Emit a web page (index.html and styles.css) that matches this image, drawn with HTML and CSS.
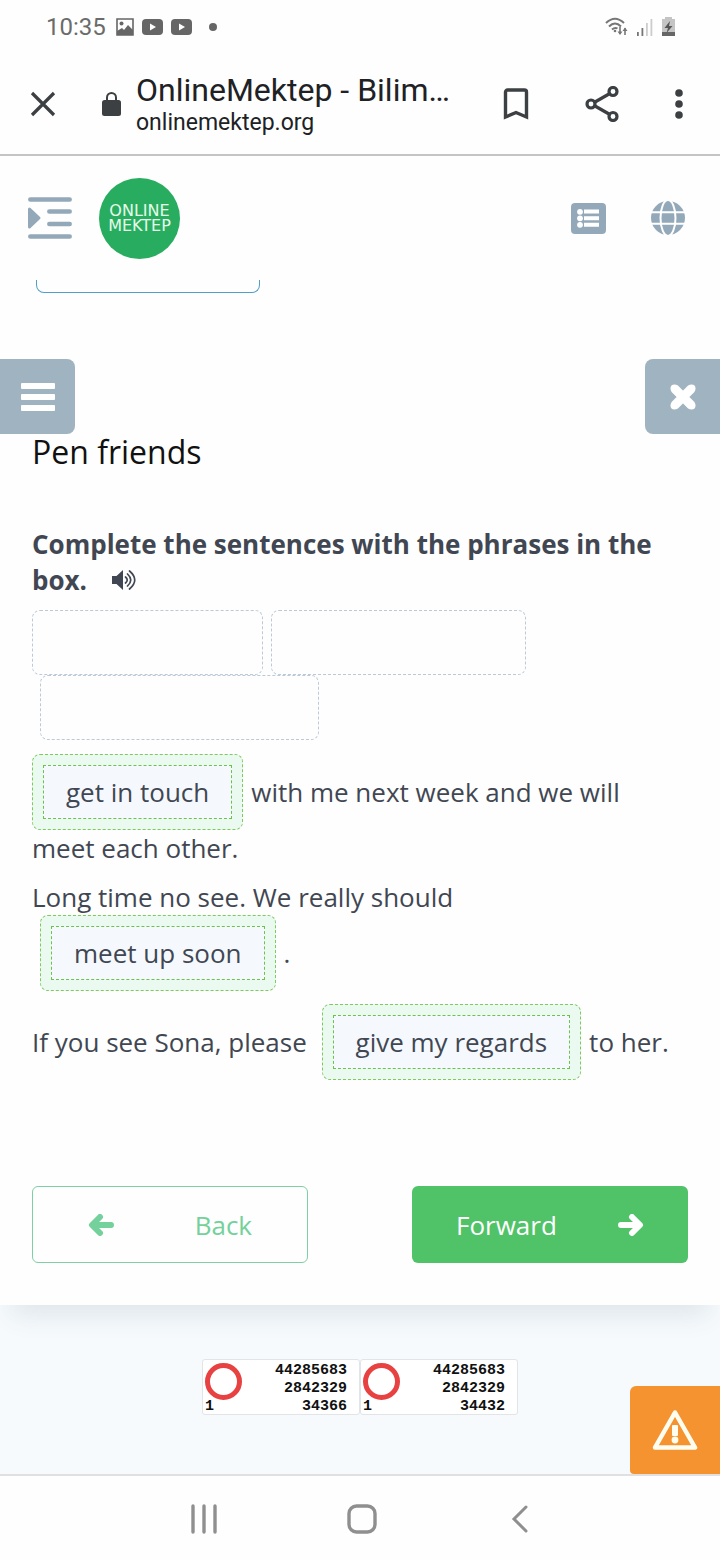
FILE: index.html
```
<!DOCTYPE html>
<html lang="en">
  <head>
    <meta charset="UTF-8" />
    <meta name="viewport" content="width=device-width, initial-scale=1.0" />
    <title>OnlineMektep - Bilim</title>
    <link rel="stylesheet" href="styles.css">
  </head>
  <body>
    <div class="status-bar">
      <span class="time">10:35</span>
      <svg width="18" height="18" viewBox="0 0 18 18"><path d="M1 1h16v16H1z" fill="none" stroke="#666" stroke-width="1.6"/><circle cx="5.5" cy="5.5" r="2" fill="#666"/><path d="M1 17v-4l5-3 2 2 4-5 5 5v5z" fill="#666"/></svg>
      <svg width="21" height="16" viewBox="0 0 21 16"><rect width="21" height="16" rx="4" fill="#666"/><path d="M8 4.500l6 3.500-6 3.500z" fill="#fff"/></svg>
      <svg width="21" height="16" viewBox="0 0 21 16"><rect width="21" height="16" rx="4" fill="#666"/><path d="M8 4.500l6 3.500-6 3.500z" fill="#fff"/></svg>
      <span class="dot"></span>
      <div class="signals">
        <svg width="23" height="20" viewBox="0 0 23 20" fill="none" stroke="#777" stroke-width="2"><path d="M1 6Q10-2.500 19 6M4 9.500Q10 3.500 16 9.500M7 12.500Q10 10 12.500 11.500"/><circle cx="10" cy="14" r="1.300" fill="#777" stroke="none"/><path d="M15 10v7M20 18v-7" stroke-width="1.600"/><path d="M12.500 14.500h5L15 18zM17.500 14h5L20 10.500z" fill="#777" stroke="none"/></svg>
        <svg width="16" height="18" viewBox="0 0 16 18"><path d="M0 14h1.800v4H0zM4.500 10h1.800v8H4.500z" fill="#777"/><path d="M9 5h1.800v13H9zM13.500 1h1.800v17h-1.800z" fill="#ccc"/></svg>
        <svg width="13" height="20" viewBox="0 0 13 20"><path d="M3 0h7v2h3v17H0V2h3z" fill="#c4c4c4"/><path d="M0 15h13v4H0z" fill="#666"/><path d="M8 4l-5.500 7H6l-1.500 5L10.500 9H7z" fill="#555"/></svg>
      </div>
    </div>

    <header class="browser-bar">
      <button type="button" aria-label="Close tab">
        <svg width="26" height="26" viewBox="0 0 26 26"><path d="M2 2l22 22M24 2L2 24" stroke="#3c4043" stroke-width="3.200"/></svg>
      </button>
      <svg class="lock" width="19" height="24" viewBox="0 0 19 24"><rect y="8" width="19" height="16" rx="2.500" fill="#3c4043"/><path d="M5 9V5.500a4.500 4.500 0 0 1 9 0V9" fill="none" stroke="#3c4043" stroke-width="2"/></svg>
      <div class="address">
        <span class="page-name">OnlineMektep - Bilim…</span>
        <span class="page-url">onlinemektep.org</span>
      </div>
      <div class="browser-actions">
        <button type="button" aria-label="Bookmark">
          <svg width="26" height="32" viewBox="0 0 26 32"><path d="M2.500 29V4a2 2 0 0 1 2-2h17a2 2 0 0 1 2 2v25L13 24.500z" fill="none" stroke="#3c4043" stroke-width="3.400"/></svg>
        </button>
        <button type="button" aria-label="Share">
          <svg width="34" height="36" viewBox="0 0 34 36" fill="none" stroke="#3c4043" stroke-width="3.200"><path d="M10 16l14-8M10 20l14 8"/><circle cx="6" cy="18" r="4"/><circle cx="28" cy="5.500" r="4"/><circle cx="28" cy="30.500" r="4"/></svg>
        </button>
        <button type="button" aria-label="More">
          <svg width="8" height="30" viewBox="0 0 8 30" fill="#3c4043"><circle cx="4" cy="4" r="3.800"/><circle cx="4" cy="15" r="3.800"/><circle cx="4" cy="26" r="3.800"/></svg>
        </button>
      </div>
    </header>

    <div class="site-header">
      <button type="button" aria-label="Open sidebar">
        <svg width="44" height="42" viewBox="0 0 44 42"><g stroke="#93a9b9" stroke-width="4.500" stroke-linecap="round"><path d="M2.300 2.500h39.400M21.300 14.500h20.400M21.300 27h20.400M2.300 39.500h39.400"/></g><path d="M1.500 12L11 21 1.500 30z" fill="#93a9b9" stroke="#93a9b9" stroke-width="3" stroke-linejoin="round"/></svg>
      </button>
      <a class="logo" href="#">ONLINE<br>MEKTEP</a>
      <div class="site-actions">
        <button type="button" aria-label="Tasks">
          <svg width="35" height="31" viewBox="0 0 35 31"><rect width="35" height="31" rx="4" fill="#93a9b9"/><g fill="#fff"><circle cx="9" cy="8.800" r="2.900"/><circle cx="9" cy="15.300" r="2.900"/><circle cx="9" cy="21.800" r="2.900"/><path d="M13 6.500h15v4H13zM13 13.200h15v4H13zM13 19.800h15v4H13z"/></g></svg>
        </button>
        <button type="button" aria-label="Language">
          <svg width="34" height="34" viewBox="0 0 34 34"><circle cx="17" cy="17" r="17" fill="#93a9b9"/><g fill="none" stroke="#fff" stroke-width="2"><ellipse cx="17" cy="17" rx="7.500" ry="18"/><path d="M0 11.300h34M0 22.700h34"/></g></svg>
        </button>
      </div>
    </div>

    <main class="lesson">
      <div class="card-edge"></div>
      <div class="lesson-tools">
        <button class="menu-btn" type="button" aria-label="Menu">
          <svg width="34" height="28" viewBox="0 0 34 28" fill="#fff"><rect width="34" height="6" rx="1"/><rect y="11" width="34" height="6" rx="1"/><rect y="22" width="34" height="6" rx="1"/></svg>
        </button>
        <button class="close-btn" type="button" aria-label="Close lesson">
          <svg width="28" height="28" viewBox="0 0 28 28"><path d="M5.500 5.500l17 17M22.500 5.500l-17 17" stroke="#fff" stroke-width="9"/><g fill="#fff"><circle cx="5.500" cy="5.500" r="4"/><circle cx="22.500" cy="5.500" r="4"/><circle cx="5.500" cy="22.500" r="4"/><circle cx="22.500" cy="22.500" r="4"/></g></svg>
        </button>
      </div>

      <div class="content">
        <h1>Pen friends</h1>
        <h2>
          Complete the sentences with the phrases in the box.
          <button class="sound" type="button" aria-label="Listen">
            <svg width="25" height="20" viewBox="0 0 25 20"><path d="M0 6h4.500L11 0v20l-6.500-6H0z" fill="#414752"/><g fill="none" stroke="#414752" stroke-width="1.700" stroke-linecap="round"><path d="M13.500 7q3.500 3 0 6M15.500 4q6.500 6 0 12M17.500 1q10.500 9 0 18"/></g></svg>
          </button>
        </h2>
        <div class="phrase-box">
          <div class="slot small"></div>
          <div class="slot medium"></div>
          <div class="slot large"></div>
        </div>
        <p><span class="answer first"><span>get in touch</span></span>with me next week and we will meet each other.</p>
        <p>Long time no see. We really should <span class="answer"><span>meet up soon</span></span>.</p>
        <p>If you see Sona, please <span class="answer"><span>give my regards</span></span>to her.</p>

        <div class="steps">
          <button class="back" type="button">
            <svg width="26" height="22" viewBox="0 0 26 22" fill="none" stroke="currentColor" stroke-width="6" stroke-linecap="round" stroke-linejoin="round"><path d="M12 3L4 11l8 8M5 11h18"/></svg>
            Back
          </button>
          <button class="forward" type="button">
            Forward
            <svg width="26" height="22" viewBox="0 0 26 22" fill="none" stroke="currentColor" stroke-width="6" stroke-linecap="round" stroke-linejoin="round"><path d="M14 3l8 8-8 8M21 11H3"/></svg>
          </button>
        </div>
      </div>
    </main>

    <footer class="site-footer">
      <div class="counter">
        <span class="ring"></span>
        <span class="online">1</span>
        <span class="numbers">44285683<br>2842329<br>34366</span>
      </div>
      <div class="counter">
        <span class="ring"></span>
        <span class="online">1</span>
        <span class="numbers">44285683<br>2842329<br>34432</span>
      </div>
      <button class="report" type="button" aria-label="Report a problem">
        <svg width="46" height="42" viewBox="0 0 46 42"><path d="M23 3.500L43 38.500H3z" fill="none" stroke="#fffdf0" stroke-width="4.500" stroke-linejoin="round"/><rect x="20" y="16" width="6" height="11" rx="1" fill="#fffdf0"/><circle cx="23" cy="31" r="3.400" fill="#fffdf0"/></svg>
      </button>
    </footer>

    <nav class="system-nav">
      <button type="button" aria-label="Recent apps">
        <svg width="30" height="30" viewBox="0 0 30 30"><path d="M4 2v26M15 2v26M26 2v26" stroke="#8f8f8f" stroke-width="3.400" stroke-linecap="round"/></svg>
      </button>
      <button type="button" aria-label="Home">
        <svg width="30" height="30" viewBox="0 0 30 30"><rect x="2" y="2" width="26" height="26" rx="7.500" fill="none" stroke="#8f8f8f" stroke-width="3.400"/></svg>
      </button>
      <button type="button" aria-label="Go back">
        <svg width="30" height="30" viewBox="0 0 30 30"><path d="M21 3L9 15l12 12" fill="none" stroke="#8f8f8f" stroke-width="3" stroke-linecap="round"/></svg>
      </button>
    </nav>
  </body>
</html>
```
FILE: styles.css
```
* {
  box-sizing: border-box;
}
body {
  margin: 0;
  min-height: 100vh;
  display: flex;
  flex-direction: column;
  background-color: #fefefe;
  color: #414752;
  font-family: "Open Sans", sans-serif;
}
button {
  display: flex;
  align-items: center;
  padding: 0;
  border: none;
  background: none;
  font: inherit;
  cursor: pointer;
}
svg {
  display: block;
  flex: none;
}
.status-bar {
  display: flex;
  align-items: center;
  height: 54px;
  padding: 0 45px 0 46px;
  color: #6b6b6b;
  font-family: Roboto, sans-serif;
  font-size: 24px;
  gap: 8px;
}
.status-bar .time {
  margin-right: 2px;
}
.dot {
  width: 8px;
  height: 8px;
  margin-left: 9px;
  border-radius: 50%;
  background-color: #666;
}
.signals {
  display: flex;
  align-items: center;
  gap: 9px;
  margin-left: auto;
}
.browser-bar {
  display: flex;
  align-items: center;
  height: 102px;
  padding: 0 37px 0 30px;
  border-bottom: 2px solid #c4c4c4;
  font-family: Roboto, sans-serif;
  color: #202124;
}
.lock {
  margin: 0 15px 0 46px;
}
.address {
  flex: 1;
  display: flex;
  flex-direction: column;
  min-width: 0;
}
.page-name {
  font-size: 32px;
  line-height: 38px;
  white-space: nowrap;
}
.page-url {
  font-size: 23px;
  line-height: 28px;
}
.browser-actions {
  display: flex;
  align-items: center;
  gap: 56px;
}
.site-header {
  display: flex;
  align-items: center;
  height: 124px;
  padding: 0 35px 0 28px;
}
.logo {
  display: flex;
  align-items: center;
  justify-content: center;
  width: 81px;
  height: 81px;
  margin-left: 27px;
  border-radius: 50%;
  background-color: #28ad60;
  color: #e6fbe9;
  font-family: "DejaVu Sans", sans-serif;
  font-size: 16px;
  line-height: 15px;
  text-align: center;
  text-decoration: none;
}
.site-actions {
  display: flex;
  align-items: center;
  gap: 45px;
  margin-left: auto;
}
.lesson {
  position: relative;
  z-index: 1;
  background-color: #fefefe;
  box-shadow: 0 22px 24px -12px rgba(60, 80, 100, 0.12);
}
.card-edge {
  width: 224px;
  height: 13px;
  margin-left: 36px;
  border: 1px solid #4f9fc6;
  border-top: none;
  border-radius: 0 0 8px 8px;
}
.lesson-tools {
  display: flex;
  justify-content: space-between;
  margin-top: 66px;
}
.menu-btn,
.close-btn {
  justify-content: center;
  width: 75px;
  height: 75px;
  background-color: #9fb3c0;
}
.menu-btn {
  border-radius: 0 8px 8px 0;
}
.close-btn {
  border-radius: 8px 0 0 8px;
}
.content {
  padding: 0 32px 42px;
}
h1 {
  margin: 0;
  color: #111;
  font-size: 32px;
  font-weight: 400;
  line-height: 36px;
}
h2 {
  margin: 56px 0 12px;
  font-size: 26px;
  font-weight: 700;
  line-height: 36px;
}
.sound {
  display: inline-flex;
  margin-left: 18px;
}
.phrase-box {
  display: flex;
  flex-wrap: wrap;
  margin-bottom: 14px;
}
.slot {
  height: 65px;
  margin-left: 8px;
  border: 1px dashed #bccad8;
  border-radius: 8px;
}
.slot.small {
  width: 231px;
  margin-left: 0;
}
.slot.medium {
  width: 255px;
}
.slot.large {
  width: 279px;
}
p {
  margin: 0 0 13px;
  font-size: 26px;
  line-height: 36px;
}
.answer {
  display: inline-block;
  margin: 0 8px;
  padding: 10px;
  border: 1px dashed #7fc95f;
  border-radius: 8px;
  background-color: #ebfaf1;
}
.answer.first {
  margin-left: 0;
}
.answer span {
  display: block;
  padding: 8px 22px;
  border: 1px dashed #6cc24a;
  background-color: #f5f9fe;
}
.steps {
  display: flex;
  justify-content: space-between;
  margin-top: 106px;
}
.steps button {
  justify-content: space-between;
  width: 276px;
  height: 77px;
  border-radius: 6px;
  font-size: 26px;
}
.back {
  padding: 0 55px;
  border: 1px solid #7fcfa5;
  color: #74d19b;
}
.forward {
  padding: 0 44px;
  background-color: #50c268;
  color: #fff;
}
.site-footer {
  position: relative;
  flex: 1;
  display: flex;
  justify-content: center;
  align-items: flex-start;
  padding-top: 54px;
  background-color: #f6fafd;
}
.counter {
  display: grid;
  grid-template-columns: 36px 1fr;
  grid-template-rows: 36px 18px;
  width: 158px;
  padding: 0 12px 0 2px;
  border: 1px solid #e2e5e8;
  border-radius: 3px;
  background-color: #fff;
  color: #111;
  font-family: "Liberation Mono", monospace;
  font-size: 15px;
  font-weight: 700;
  line-height: 18px;
}
.ring {
  width: 37px;
  height: 37px;
  margin-top: 3px;
  border: 5px solid #e84142;
  border-radius: 50%;
}
.online {
  grid-row: 2;
  padding-top: 2px;
}
.numbers {
  grid-column: 2;
  grid-row: 1 / 3;
  text-align: right;
  padding-top: 2px;
}
.report {
  position: absolute;
  right: 0;
  bottom: 0;
  justify-content: center;
  width: 90px;
  height: 88px;
  border-radius: 6px 0 0 4px;
  background-color: #f4932f;
}
.system-nav {
  display: flex;
  justify-content: center;
  align-items: center;
  gap: 128px;
  height: 86px;
  padding: 2px 0 0 4px;
  border-top: 2px solid #e0e0e0;
  background-color: #fefefe;
}
```
